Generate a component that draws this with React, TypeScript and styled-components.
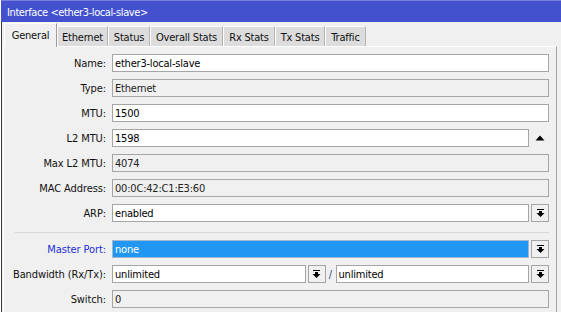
import React from "react";
import styled, { createGlobalStyle } from "styled-components";

// =============================================================================
// Constants
// =============================================================================

const PANEL = "#f0f0f0";
const BORDER = "#a5a5a5";
const TITLE_BLUE = "#4451cf";
const FONT = `"DejaVu Sans Condensed", "Liberation Sans", Arial, sans-serif`;

const GlobalStyle = createGlobalStyle`
  html, body {
    margin: 0;
    padding: 0;
    background: ${PANEL};
    font-family: ${FONT};
    font-size: 11px;
    color: #000;
  }
`;

// =============================================================================
// Styled Components
// =============================================================================

const Window = styled.div`
  width: 561px;
  height: 312px;
  overflow: hidden;
  display: flex;
  flex-direction: column;
  background: ${PANEL};
  border-left: 1px solid #fff;
  box-sizing: border-box;
`;

const TitleBar = styled.div`
  height: 22px;
  flex: none;
  box-sizing: border-box;
  display: flex;
  align-items: center;
  padding: 1px 0 0 6px;
  background: ${TITLE_BLUE};
  border-top: 1px solid #7780dc;
  color: #fff;
  font-size: 11px;
  letter-spacing: -0.4px;
`;

const Body = styled.div`
  flex: 1;
  display: flex;
  flex-direction: column;
  padding: 1px 4px 0 1px;
  border-left: 1px solid #3a3a3a;
`;

const TabRow = styled.div`
  display: flex;
  align-items: flex-end;
  height: 24px;
  padding-left: 1px;
  position: relative;
  z-index: 1;
  margin-bottom: -1px;
`;

const Tab = styled.div<{ $active?: boolean; $width: number }>`
  box-sizing: border-box;
  width: ${(p) => p.$width}px;
  display: flex;
  align-items: center;
  justify-content: center;
  height: ${(p) => (p.$active ? 24 : 20)}px;
  margin-bottom: ${(p) => (p.$active ? 0 : 1)}px;
  padding-top: ${(p) => (p.$active ? 0 : 1)}px;
  background: ${(p) => (p.$active ? PANEL : "#dcdcdc")};
  border-top: 1px solid #fff;
  border-left: 1px solid #fff;
  border-right: 1px solid ${(p) => (p.$active ? "#9a9a9a" : "#b4b4b4")};
  white-space: nowrap;
  letter-spacing: -0.2px;
  color: #111;
`;

const Panel = styled.div`
  flex: 1;
  display: flex;
  flex-direction: column;
  gap: 7px;
  padding: 7px 7px 0 0;
  border-top: 1px solid #fff;
  border-left: 1px solid #fff;
  border-right: 1px solid #a0a0a0;
`;

const Row = styled.div`
  display: flex;
  align-items: center;
  height: 18px;
`;

const Label = styled.div<{ $accent?: boolean }>`
  width: 102px;
  flex: none;
  text-align: right;
  padding-right: 6px;
  white-space: nowrap;
  letter-spacing: -0.1px;
  color: ${(p) => (p.$accent ? "#2030d8" : "#111")};
`;

const Field = styled.div<{ $readonly?: boolean; $selected?: boolean }>`
  flex: 1;
  min-width: 0;
  height: 18px;
  box-sizing: border-box;
  display: flex;
  align-items: center;
  padding: 0 2px;
  border: 1px solid ${(p) => (p.$selected ? "#9fb8d0" : BORDER)};
  background: ${(p) =>
    p.$selected ? "#2196f3" : p.$readonly ? PANEL : "#fff"};
  color: ${(p) => (p.$selected ? "#fff" : p.$readonly ? "#222" : "#000")};
  letter-spacing: -0.2px;
  white-space: nowrap;
`;

const DropButton = styled.div`
  flex: none;
  width: 18px;
  height: 18px;
  margin-left: 2px;
  box-sizing: border-box;
  border: 1px solid ${BORDER};
  background: ${PANEL};
  display: flex;
  align-items: center;
  justify-content: center;
`;

const ArrowSlot = styled.div`
  flex: none;
  width: 18px;
  margin-left: 2px;
  display: flex;
  align-items: center;
  justify-content: center;
`;

const Slash = styled.div`
  flex: none;
  width: 10px;
  text-align: center;
  color: #2a4a80;
`;

const Separator = styled.div`
  height: 3px;
  margin-left: 11px;
  border-bottom: 1px solid #d6d6d6;
`;

// =============================================================================
// Icons
// =============================================================================

const DownIcon = () => (
  <svg width="9" height="9" viewBox="0 0 9 9">
    <rect x="1" y="0" width="7" height="1" fill="#000" />
    <rect x="3" y="2" width="3" height="2" fill="#000" />
    <polygon points="0.5,4 8.5,4 4.5,8" fill="#000" />
  </svg>
);

const UpIcon = () => (
  <svg width="10" height="6" viewBox="0 0 10 6">
    <polygon points="0.5,5.5 9.5,5.5 5,0.5" fill="#000" />
  </svg>
);

// =============================================================================
// Main Component
// =============================================================================

const tabs = [
  { name: "General", width: 53 },
  { name: "Ethernet", width: 51 },
  { name: "Status", width: 42 },
  { name: "Overall Stats", width: 73 },
  { name: "Rx Stats", width: 52 },
  { name: "Tx Stats", width: 50 },
  { name: "Traffic", width: 41 },
];

const App = () => {
  return (
    <>
      <GlobalStyle />
      <Window>
        <TitleBar>Interface &lt;ether3-local-slave&gt;</TitleBar>
        <Body>
          <TabRow>
            {tabs.map((t, i) => (
              <Tab key={t.name} $active={i === 0} $width={t.width}>
                {t.name}
              </Tab>
            ))}
          </TabRow>
          <Panel>
            <Row>
              <Label>Name:</Label>
              <Field>ether3-local-slave</Field>
            </Row>
            <Row>
              <Label>Type:</Label>
              <Field $readonly>Ethernet</Field>
            </Row>
            <Row>
              <Label>MTU:</Label>
              <Field>1500</Field>
            </Row>
            <Row>
              <Label>L2 MTU:</Label>
              <Field>1598</Field>
              <ArrowSlot>
                <UpIcon />
              </ArrowSlot>
            </Row>
            <Row>
              <Label>Max L2 MTU:</Label>
              <Field $readonly>4074</Field>
            </Row>
            <Row>
              <Label>MAC Address:</Label>
              <Field $readonly>00:0C:42:C1:E3:60</Field>
            </Row>
            <Row>
              <Label>ARP:</Label>
              <Field>enabled</Field>
              <DropButton>
                <DownIcon />
              </DropButton>
            </Row>
            <Separator />
            <Row>
              <Label $accent>Master Port:</Label>
              <Field $selected>none</Field>
              <DropButton>
                <DownIcon />
              </DropButton>
            </Row>
            <Row>
              <Label>Bandwidth (Rx/Tx):</Label>
              <Field>unlimited</Field>
              <DropButton>
                <DownIcon />
              </DropButton>
              <Slash>/</Slash>
              <Field>unlimited</Field>
              <DropButton>
                <DownIcon />
              </DropButton>
            </Row>
            <Row>
              <Label>Switch:</Label>
              <Field $readonly>0</Field>
            </Row>
          </Panel>
        </Body>
      </Window>
    </>
  );
};

export default App;
